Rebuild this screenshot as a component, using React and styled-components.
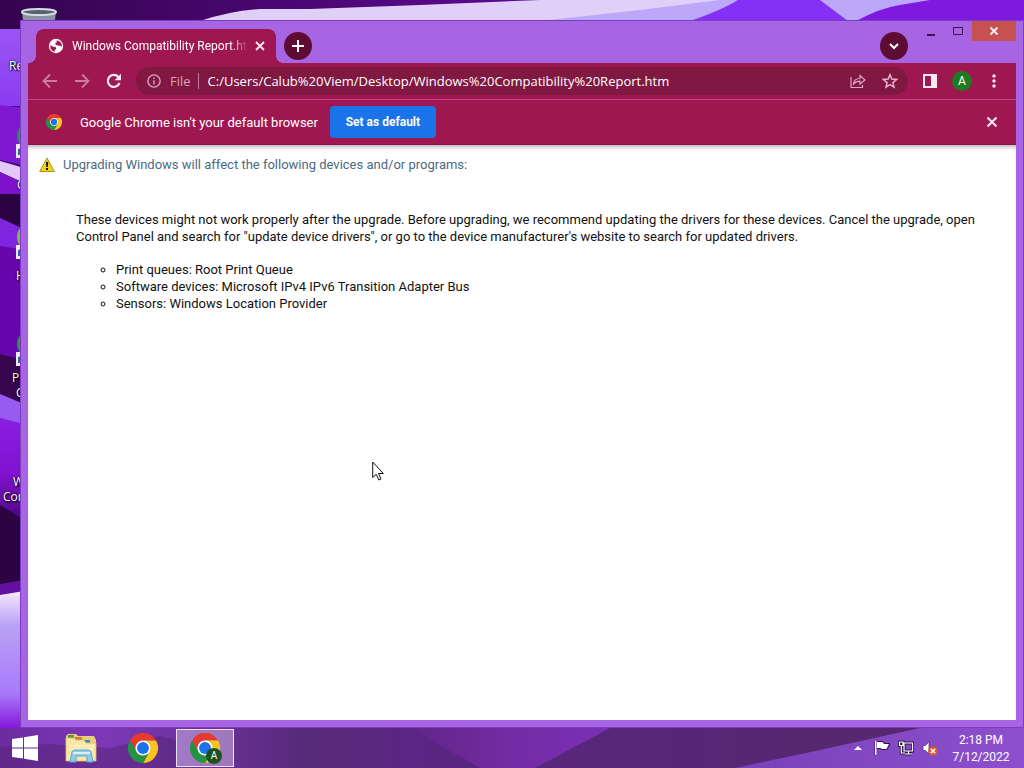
import React from "react";
import styled, { createGlobalStyle } from "styled-components";

const GlobalStyle = createGlobalStyle`
  *, *::before, *::after { box-sizing: border-box; }
  body { margin: 0; font-family: Roboto, "Open Sans", sans-serif; font-size: 13px; }
  button { font: inherit; border: 0; padding: 0; background: none; color: inherit; }
  svg { display: block; flex: none; }
`;

const Desktop = styled.div`
  position: relative;
  display: flex;
  flex-direction: column;
  min-height: 100vh;
  overflow: hidden;
  background: #4a0a86;
`;

const Wallpaper = styled.svg`
  position: absolute;
  inset: 0;
  width: 100%;
  height: 100%;
`;

const DesktopIcon = styled.div`
  position: absolute;
  left: ${(p) => p.$x}px;
  top: ${(p) => p.$y}px;
  color: #fff;
  font-family: "Open Sans", sans-serif;
  font-size: 12px;
  line-height: 15px;
  text-align: right;
  text-shadow: 1px 1px 2px #000, 0 0 2px #000;
`;

const Window = styled.main`
  position: relative;
  flex: 1;
  display: flex;
  flex-direction: column;
  margin: 20px 0 0 20px;
  padding: 0 7px 7px;
  border: 1px solid #7a3fc0;
  background: #a865e3;
`;

const TabStrip = styled.div`
  display: flex;
  align-items: flex-end;
  height: 42px;
  padding-left: 8px;
`;

const Tab = styled.div`
  position: relative;
  display: flex;
  align-items: center;
  width: 240px;
  height: 34px;
  padding: 0 8px 0 12px;
  border-radius: 8px 8px 0 0;
  background: #9f1750;
  color: #fff;
  font-size: 12px;

  &::before, &::after {
    content: "";
    position: absolute;
    bottom: 0;
    width: 8px;
    height: 8px;
  }
  &::before { left: -8px; background: radial-gradient(circle at 0 0, transparent 8px, #9f1750 8px); }
  &::after { right: -8px; background: radial-gradient(circle at 100% 0, transparent 8px, #9f1750 8px); }
`;

const TabTitle = styled.span`
  flex: 1;
  margin: 0 4px 0 8px;
  overflow: hidden;
  white-space: nowrap;
  mask-image: linear-gradient(to right, #000 90%, transparent);
`;

const IconButton = styled.button`
  display: flex;
  align-items: center;
  justify-content: center;
  flex: none;
  width: ${(p) => p.$w || 32}px;
  height: ${(p) => p.$h || 28}px;
  color: ${(p) => p.$color || "#fbe9f1"};
`;

const RoundButton = styled(IconButton)`
  width: 28px;
  height: 28px;
  margin: 0 8px 3px;
  border-radius: 50%;
  background: #5f0c35;
  color: #fff;
`;

const WindowControls = styled.div`
  display: flex;
  align-self: flex-start;
  margin-left: 2px;
`;

const CloseWindow = styled(IconButton)`
  width: 44px;
  height: 20px;
  background: #c75050;
`;

const Spacer = styled.div`
  flex: 1;
`;

const Toolbar = styled.div`
  display: flex;
  align-items: center;
  height: 37px;
  padding: 0 6px;
  border-bottom: 1px solid #c4477f;
  background: #9f1750;
`;

const AddressBar = styled.label`
  display: flex;
  align-items: center;
  flex: 1;
  height: 28px;
  margin: 0 6px;
  padding: 0 2px 0 11px;
  border-radius: 14px;
  background: #801842;
  color: #d9a0b9;
  font-family: "Open Sans", sans-serif;
`;

const Scheme = styled.span`
  margin-left: 9px;
  padding-right: 7px;
  border-right: 1px solid #c47b9c;
  line-height: 16px;
`;

const AddressInput = styled.input`
  flex: 1;
  min-width: 0;
  margin-left: 9px;
  padding: 0;
  border: 0;
  outline: 0;
  background: none;
  color: #fff;
  font: inherit;
`;

const Avatar = styled.span`
  display: flex;
  align-items: center;
  justify-content: center;
  width: 20px;
  height: 20px;
  border-radius: 50%;
  background: #1f7a1f;
  color: #fff;
  font-size: 12px;
`;

const InfoBar = styled.div`
  display: flex;
  align-items: center;
  height: 45px;
  padding: 0 8px 0 18px;
  border-bottom: 1px solid #8a1345;
  background: #9f1750;
  color: #fff;
`;

const InfoText = styled.span`
  margin: 0 12px 0 18px;
`;

const PrimaryButton = styled.button`
  width: 106px;
  height: 32px;
  border-radius: 4px;
  background: #1a73e8;
  color: #fff;
  font-size: 12px;
  font-weight: 700;
`;

const Page = styled.article`
  flex: 1;
  padding: 10px 32px 16px 11px;
  background: #fff;
  box-shadow: inset 0 4px 4px -2px #b8b0b8;
  color: #111;
  line-height: 17px;
`;

const PageHeading = styled.h1`
  display: flex;
  align-items: center;
  gap: 8px;
  margin: 0 0 36px;
  color: #4a6a84;
  font-size: 13px;
  font-weight: 400;
  line-height: 20px;
`;

const Report = styled.section`
  margin-left: 37px;

  p { margin: 0 0 16px; }
  ul { margin: 0; padding-left: 40px; list-style: circle; }
`;

const Taskbar = styled.footer`
  position: relative;
  display: flex;
  align-items: center;
  height: 40px;
  color: #fff;
`;

const TaskbarArt = styled.svg`
  position: absolute;
  inset: 0;
  width: 100%;
  height: 100%;
`;

const TaskButton = styled.button`
  position: relative;
  display: flex;
  align-items: center;
  justify-content: center;
  width: ${(p) => (p.$start ? 46 : 58)}px;
  height: 38px;
  margin: 0 2px;
  border: ${(p) => (p.$active ? "1px solid #efe2f8" : "0")};
  background: ${(p) => (p.$active ? "rgba(205, 180, 225, 0.55)" : "none")};
`;

const Badge = styled.span`
  position: absolute;
  right: 11px;
  bottom: 2px;
  width: 16px;
  height: 16px;
  border-radius: 50%;
  background: #1c5220;
  color: #fff;
  font-size: 10px;
  line-height: 16px;
`;

const Tray = styled.div`
  position: relative;
  display: flex;
  align-items: center;
  margin-left: auto;
`;

const Clock = styled.time`
  width: 74px;
  margin: 2px 6px 0 2px;
  font-size: 12px;
  line-height: 17px;
  text-align: center;
`;

const Pointer = styled.svg`
  position: absolute;
  left: 372px;
  top: 461px;
`;

const ChromeLogo = ({ size }) => (
  <svg width={size} height={size} viewBox="0 0 48 48" aria-hidden="true">
    <circle cx="24" cy="24" r="13" fill="#fff" />
    <path fill="#e33b2e" d="M3.2 12A24 24 0 0 1 44.8 12H24A12 12 0 0 0 13.6 30Z" />
    <path fill="#fcc31e" d="M44.8 12A24 24 0 0 1 24 48L34.4 30A12 12 0 0 0 24 12Z" />
    <path fill="#229342" d="M24 48A24 24 0 0 1 3.2 12L13.6 30A12 12 0 0 0 34.4 30Z" />
    <circle cx="24" cy="24" r="9.5" fill="#1a73e8" />
  </svg>
);

const Stroke = ({ size = 16, w = 2, d, box = 16 }) => (
  <svg width={size} height={size} viewBox={`0 0 ${box} ${box}`} fill="none" stroke="currentColor" strokeWidth={w} aria-hidden="true">
    <path d={d} />
  </svg>
);

const GlobeIcon = () => (
  <svg width="16" height="16" viewBox="0 0 16 16" aria-hidden="true">
    <circle cx="8" cy="8" r="7.2" fill="#fff" />
    <path fill="#9f1750" d="M2.2 7.2 5.3 8.8 8 9.2 8.2 11 6.6 12.2V14L4.3 12.7 2.5 10.5ZM8.4 2.2 12 3.5 13.8 6.5V9L12.2 7.8 9.5 7.6 7.2 6.3 7.6 4.8 9 4.2Z" />
  </svg>
);

const WarningIcon = () => (
  <svg width="16" height="16" viewBox="0 0 16 16" aria-hidden="true">
    <path d="M8 1 15.3 14.5H.7Z" fill="#f2d21c" stroke="#a8901c" strokeLinejoin="round" />
    <path d="M7 5h2.200L8.800 10H7.300ZM7 11h2v2H7Z" fill="#111" />
  </svg>
);

const FolderIcon = () => (
  <svg width="34" height="32" viewBox="0 0 34 32" aria-hidden="true">
    <path d="M2 4 4 2h8l2 2h16l2 4v20H2Z" fill="#e9cf7c" />
    <path d="M4 3h6v3H4Z" fill="#4d9b49" />
    <path d="M11 5h7v3h-7Z" fill="#d67b38" />
    <path d="M19 8h7v3h-7Z" fill="#3989cf" />
    <path d="M2 6h8l2 2h8l2 3h10v18H2Z" fill="#f7e7a4" stroke="#dcc069" strokeWidth=".8" />
    <path d="M5 14h25M5 17h25" stroke="#fff6cf" />
    <path d="M6 30 8 20q.5-2 3-2h13q2.500 0 3 2l2 10h-6v-6H12v6Z" fill="#8fcbe9" stroke="#5ba7d0" />
    <path d="M9 21h17" stroke="#d7f1fb" strokeWidth="2" />
  </svg>
);

export default function App() {
  return (
    <Desktop>
      <GlobalStyle />
      <Wallpaper viewBox="0 0 1024 768" preserveAspectRatio="none" aria-hidden="true">
        <defs>
          <linearGradient id="left" x1="0" y1="0" x2="0" y2="1">
            <stop offset="0" stopColor="#9b55f5" />
            <stop offset="1" stopColor="#8a3cf0" />
          </linearGradient>
          <linearGradient id="mid" x1="0" y1="0" x2="0" y2="1">
            <stop offset="0" stopColor="#8a1fe2" />
            <stop offset=".6" stopColor="#8012d0" />
            <stop offset="1" stopColor="#5a0a90" />
          </linearGradient>
          <linearGradient id="snow" x1="0" y1="0" x2="0" y2="1">
            <stop offset="0" stopColor="#f6e8fb" />
            <stop offset=".25" stopColor="#b9a2f5" />
            <stop offset=".75" stopColor="#a878fa" />
            <stop offset="1" stopColor="#8617dc" />
          </linearGradient>
          <linearGradient id="sky" x1="0" y1="0" x2="1" y2="0">
            <stop offset="0" stopColor="#35044f" />
            <stop offset="1" stopColor="#5e0a94" />
          </linearGradient>
        </defs>
        <path d="M0 0H560V30H0Z" fill="url(#sky)" />
        <path d="M200 21Q230 11 260 9H310L420 5 540 0H940V21Z" fill="#e0d0f7" />
        <path d="M540 21 640 10 720 0H940V21Z" fill="#bba8f9" />
        <path d="M690 21Q722 10 738 0H820L848 21Z" fill="#8630f6" />
        <path d="M856 21Q880 8 900 5L930 0H1024V21Z" fill="#8019df" />
        <path d="M0 29H24V106H0Z" fill="url(#left)" />
        <path d="M0 105 24 108V165L0 160Z" fill="#7f18d3" />
        <path d="M0 161 24 168V183L0 172Z" fill="#e2c7f7" />
        <path d="M0 172 24 183V195H0Z" fill="#7c12cc" />
        <path d="M0 194H24V230L0 221Z" fill="#2b0340" />
        <path d="M0 218 24 229V250L0 247Z" fill="#7d25df" />
        <path d="M0 246 24 250V358H0Z" fill="#6706ac" />
        <path d="M0 354 24 360V404L0 395Z" fill="#38054f" />
        <path d="M0 394 24 404V425L0 418Z" fill="#975bf0" />
        <path d="M0 418 24 424V510H0Z" fill="url(#mid)" />
        <path d="M0 505 24 520V585H0Z" fill="#2c0442" />
        <path d="M0 584 24 580V594L0 596Z" fill="#6210a0" />
        <path d="M0 595 24 591V728H0Z" fill="url(#snow)" />
      </Wallpaper>

      <DesktopIcon $x={20} $y={8}>
        <svg width="38" height="20" viewBox="0 0 38 20" aria-hidden="true">
          <path d="M2 4 4 20H34L36 4Z" fill="#8b93a3" />
          <ellipse cx="19" cy="4" rx="17" ry="3" fill="#59636f" stroke="#d4dce5" strokeWidth="2" />
        </svg>
      </DesktopIcon>
      <DesktopIcon $x={9} $y={58}>Re</DesktopIcon>
      {[[122, "#2e8f4e"], [223, "#82b944"], [330, "#2e8f4e"]].map(([y, color]) => (
        <DesktopIcon key={y} $x={15} $y={y}>
          <svg width="28" height="38" viewBox="0 0 28 38" aria-hidden="true">
            <circle cx="16" cy="14" r="14" fill={color} />
            <path d="M1 22H15V36H1Z" fill="#eee9f7" />
            <path d="M4 33V28L8 25" stroke="#2763b4" strokeWidth="2" fill="none" />
          </svg>
        </DesktopIcon>
      ))}
      <DesktopIcon $x={17} $y={177}>C</DesktopIcon>
      <DesktopIcon $x={16} $y={268}>H</DesktopIcon>
      <DesktopIcon $x={12} $y={370}>P</DesktopIcon>
      <DesktopIcon $x={16} $y={385}>C</DesktopIcon>
      <DesktopIcon $x={13} $y={474}>W</DesktopIcon>
      <DesktopIcon $x={3} $y={489}>Con</DesktopIcon>

      <Window>
        <TabStrip>
          <Tab>
            <GlobeIcon />
            <TabTitle>Windows Compatibility Report.htm</TabTitle>
            <IconButton $w={16} $h={16} aria-label="Close tab">
              <Stroke size={10} box={10} w={1.8} d="M1 1 9 9M9 1 1 9" />
            </IconButton>
          </Tab>
          <RoundButton aria-label="New tab"><Stroke size={12} box={12} d="M6 0V12M0 6H12" /></RoundButton>
          <Spacer />
          <RoundButton aria-label="Search tabs"><Stroke size={10} box={10} d="M1 3 5 7 9 3" /></RoundButton>
          <WindowControls>
            <IconButton $w={26} $h={20} $color="#3c1260" aria-label="Minimize"><Stroke size={10} box={10} d="M1 9H9" /></IconButton>
            <IconButton $w={28} $h={20} $color="#3c1260" aria-label="Maximize"><Stroke size={10} box={10} w={1} d="M.5 1V8.500H9.500V1M0 1.500H10" /></IconButton>
            <CloseWindow aria-label="Close"><Stroke size={8} box={8} d="M.5 .5 7.500 7.500M7.500 .5 .5 7.500" /></CloseWindow>
          </WindowControls>
        </TabStrip>

        <Toolbar>
          <IconButton $color="#cf7ba0" aria-label="Back"><Stroke w={1.8} d="M15 8H2M8 1.500 1.500 8 8 14.500" /></IconButton>
          <IconButton $color="#cf7ba0" aria-label="Forward"><Stroke w={1.8} d="M1 8H14M8 1.500 14.500 8 8 14.500" /></IconButton>
          <IconButton aria-label="Reload">
            <svg width="16" height="16" viewBox="0 0 16 16" fill="none" aria-hidden="true">
              <path d="M13.500 10A6 6 0 1 1 12.200 3.800L13.500 5.200" stroke="currentColor" strokeWidth="2.200" />
              <path d="M15 .8V7.200H8.600Z" fill="currentColor" />
            </svg>
          </IconButton>
          <AddressBar>
            <Stroke size={14} w={1.6} d="M8 1A7 7 0 1 1 8 15 7 7 0 1 1 8 1M8 7V12M8 4V5.600" />
            <Scheme>File</Scheme>
            <AddressInput aria-label="Address" defaultValue="C:/Users/Calub%20Viem/Desktop/Windows%20Compatibility%20Report.htm" />
            <IconButton $color="#dda8c0" aria-label="Share">
              <Stroke w={1.2} d="M1 4V14.500H12.500V12M3.500 11Q4 5.500 10 5.500V2.500L15 7 10 11V8.200Q6 8 3.500 11Z" />
            </IconButton>
            <IconButton $color="#e5b4ca" aria-label="Bookmark">
              <Stroke w={1.5} d="M8 1.700 9.800 6.100 14.500 6.500 10.900 9.600 12 14.200 8 11.700 4 14.200 5.100 9.600 1.500 6.500 6.200 6.100Z" />
            </IconButton>
          </AddressBar>
          <IconButton aria-label="Side panel">
            <svg width="14" height="14" viewBox="0 0 14 14" aria-hidden="true">
              <path d="M1 1H13V13H1Z" fill="none" stroke="currentColor" strokeWidth="2" />
              <path d="M8 1H13V13H8Z" fill="currentColor" />
            </svg>
          </IconButton>
          <IconButton aria-label="Profile"><Avatar>A</Avatar></IconButton>
          <IconButton aria-label="Menu">
            <svg width="4" height="14" viewBox="0 0 4 14" fill="currentColor" aria-hidden="true">
              <circle cx="2" cy="2" r="1.700" /><circle cx="2" cy="7" r="1.700" /><circle cx="2" cy="12" r="1.700" />
            </svg>
          </IconButton>
        </Toolbar>

        <InfoBar>
          <ChromeLogo size={16} />
          <InfoText>Google Chrome isn't your default browser</InfoText>
          <PrimaryButton>Set as default</PrimaryButton>
          <Spacer />
          <IconButton aria-label="Dismiss"><Stroke size={10} box={10} d="M.5 .5 9.500 9.500M9.500 .5 .5 9.500" /></IconButton>
        </InfoBar>

        <Page>
          <PageHeading>
            <WarningIcon />
            Upgrading Windows will affect the following devices and/or programs:
          </PageHeading>
          <Report>
            <p>
              These devices might not work properly after the upgrade. Before upgrading, we recommend updating the
              drivers for these devices. Cancel the upgrade, open Control Panel and search for "update device
              drivers", or go to the device manufacturer's website to search for updated drivers.
            </p>
            <ul>
              <li>Print queues: Root Print Queue</li>
              <li>Software devices: Microsoft IPv4 IPv6 Transition Adapter Bus</li>
              <li>Sensors: Windows Location Provider</li>
            </ul>
          </Report>
        </Page>
      </Window>

      <Taskbar>
        <TaskbarArt viewBox="0 0 1024 40" preserveAspectRatio="none" aria-hidden="true">
          <defs>
            <linearGradient id="bar" x1="0" y1="0" x2="1" y2="0">
              <stop offset="0" stopColor="#6c2ba0" />
              <stop offset=".1" stopColor="#7d38b8" />
              <stop offset=".3" stopColor="#572a78" />
              <stop offset=".4" stopColor="#5b2583" />
              <stop offset=".8" stopColor="#55286f" />
              <stop offset="1" stopColor="#55286f" />
            </linearGradient>
            <linearGradient id="valley" x1="0" y1="0" x2="1" y2="0">
              <stop offset="0" stopColor="#5f2687" />
              <stop offset=".5" stopColor="#742ba3" />
              <stop offset="1" stopColor="#7a30b6" />
            </linearGradient>
            <linearGradient id="slope" x1="0" y1="0" x2="1" y2="0">
              <stop offset="0" stopColor="#7a40b8" />
              <stop offset="1" stopColor="#8d4fce" />
            </linearGradient>
          </defs>
          <path d="M0 0H1024V40H0Z" fill="url(#bar)" />
          <path d="M0 19 50 16 110 20 160 8 176 12V40H0Z" fill="#532472" opacity=".5" />
          <path d="M410 0H610L535 40H480Z" fill="url(#valley)" />
          <path d="M735 40 820 22 920 0H1024V40Z" fill="url(#slope)" />
        </TaskbarArt>
        <TaskButton $start aria-label="Start">
          <svg width="26" height="26" viewBox="0 0 26 26" fill="#fff" aria-hidden="true">
            <path d="M0 4 11 2.400V12.400H0ZM12 2.200 26 0V12.400H12ZM0 13.500H11V23.600L0 22ZM12 13.500H26V26L12 23.800Z" />
          </svg>
        </TaskButton>
        <TaskButton aria-label="File Explorer"><FolderIcon /></TaskButton>
        <TaskButton aria-label="Google Chrome"><ChromeLogo size={30} /></TaskButton>
        <TaskButton $active aria-label="Windows Compatibility Report">
          <ChromeLogo size={30} />
          <Badge>A</Badge>
        </TaskButton>
        <Tray>
          <IconButton $w={24} aria-label="Show hidden icons">
            <svg width="8" height="4" viewBox="0 0 8 4" aria-hidden="true"><path d="M4 0 8 4H0Z" fill="#fff" /></svg>
          </IconButton>
          <IconButton $w={24} aria-label="Action Center">
            <svg width="16" height="16" viewBox="0 0 16 16" aria-hidden="true">
              <path d="M1.500 1V15.500M3 2H8.500L10 4H15L12.500 9H8L6.500 8H3Z" fill="#fff" stroke="#32144a" strokeWidth="2" />
              <path d="M1 1H2.500V15H1ZM3 2H8.500L10 4H15L12.500 9H8L6.500 8H3Z" fill="#fff" />
            </svg>
          </IconButton>
          <IconButton $w={24} aria-label="Network">
            <svg width="16" height="16" viewBox="0 0 16 16" fill="none" aria-hidden="true">
              <path d="M6 3H14.500V11H6ZM10.500 11V14M7 14H14M1.500 2H5V5.500H1.500ZM3.300 5.500V13H7" stroke="#32144a" strokeWidth="3" />
              <path d="M6 3H14.500V11H6ZM10.500 11V14M7 14H14M1.500 2H5V5.500H1.500ZM3.300 5.500V13H7" stroke="#fff" strokeWidth="1.200" />
            </svg>
          </IconButton>
          <IconButton $w={24} aria-label="Volume">
            <svg width="16" height="16" viewBox="0 0 16 16" aria-hidden="true">
              <path d="M1 5.500H3.500L7 1.500V14L3.500 10.500H1Z" fill="#fff" stroke="#32144a" strokeWidth=".6" />
              <circle cx="11" cy="11" r="4.800" fill="#d95335" />
              <path d="M8.800 8.800 13.200 13.200M13.200 8.800 8.800 13.200" stroke="#fff" strokeWidth="1.600" />
            </svg>
          </IconButton>
          <Clock dateTime="2022-07-12T14:18">2:18 PM<br />7/12/2022</Clock>
        </Tray>
      </Taskbar>

      <Pointer width="12" height="20" viewBox="0 0 12 20" aria-hidden="true">
        <path d="M.7 1V16.500L4.200 13.300 6.800 19 9 18 6.500 12.500H11.300Z" fill="#fff" stroke="#111" />
      </Pointer>
    </Desktop>
  );
}
